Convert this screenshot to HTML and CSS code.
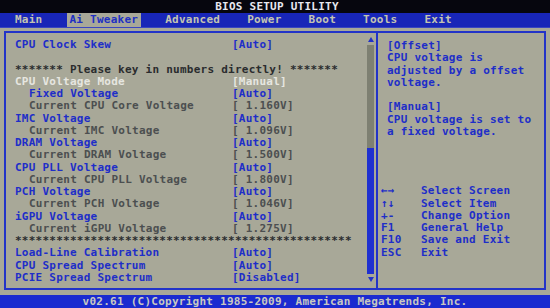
FILE: index.html
```html
<!DOCTYPE html>
<html lang="en">

<head>
    <meta charset="UTF-8" />
    <meta name="viewport" content="width=device-width, initial-scale=1.0" />
    <title>BIOS Setup Utility</title>
    <link rel="stylesheet" href="styles.css">
</head>

<body>
    <div class="screen">
        <div class="title">BIOS SETUP UTILITY</div>
        <nav class="menu">
            <span class="tab">Main</span>
            <span class="tab active">Ai Tweaker</span>
            <span class="tab">Advanced</span>
            <span class="tab">Power</span>
            <span class="tab">Boot</span>
            <span class="tab">Tools</span>
            <span class="tab">Exit</span>
        </nav>
        <div class="main">
            <div class="frame">
                <div class="list">
                    <div class="rows">
                        <div class="row item"><span>CPU Clock Skew</span><span>[Auto]</span></div>
                        <div class="row"></div>
                        <div class="row note">******* Please key in numbers directly! *******</div>
                        <div class="row selected"><span>CPU Voltage Mode</span><span>[Manual]</span></div>
                        <div class="row item sub"><span>Fixed Voltage</span><span>[Auto]</span></div>
                        <div class="row info sub"><span>Current CPU Core Voltage</span><span>[ 1.160V]</span></div>
                        <div class="row item"><span>IMC Voltage</span><span>[Auto]</span></div>
                        <div class="row info sub"><span>Current IMC Voltage</span><span>[ 1.096V]</span></div>
                        <div class="row item"><span>DRAM Voltage</span><span>[Auto]</span></div>
                        <div class="row info sub"><span>Current DRAM Voltage</span><span>[ 1.500V]</span></div>
                        <div class="row item"><span>CPU PLL Voltage</span><span>[Auto]</span></div>
                        <div class="row info sub"><span>Current CPU PLL Voltage</span><span>[ 1.800V]</span></div>
                        <div class="row item"><span>PCH Voltage</span><span>[Auto]</span></div>
                        <div class="row info sub"><span>Current PCH Voltage</span><span>[ 1.046V]</span></div>
                        <div class="row item"><span>iGPU Voltage</span><span>[Auto]</span></div>
                        <div class="row info sub"><span>Current iGPU Voltage</span><span>[ 1.275V]</span></div>
                        <div class="row note">*************************************************</div>
                        <div class="row item"><span>Load-Line Calibration</span><span>[Auto]</span></div>
                        <div class="row item"><span>CPU Spread Spectrum</span><span>[Auto]</span></div>
                        <div class="row item"><span>PCIE Spread Spectrum</span><span>[Disabled]</span></div>
                    </div>
                    <div class="scrollbar">
                        <div class="arrow up"></div>
                        <div class="track">
                            <div class="gap"></div>
                            <div class="thumb"></div>
                        </div>
                        <div class="arrow down"></div>
                    </div>
                </div>
                <div class="help">
                    <div class="help-text">
                        <div>[Offset]</div>
                        <div>CPU voltage is</div>
                        <div>adjusted by a offset</div>
                        <div>voltage.</div>
                        <div class="line-gap"></div>
                        <div>[Manual]</div>
                        <div>CPU voltage is set to</div>
                        <div>a fixed voltage.</div>
                    </div>
                    <div class="keys">
                        <span>←→</span><span>Select Screen</span>
                        <span>↑↓</span><span>Select Item</span>
                        <span>+-</span><span>Change Option</span>
                        <span>F1</span><span>General Help</span>
                        <span>F10</span><span>Save and Exit</span>
                        <span>ESC</span><span>Exit</span>
                    </div>
                </div>
            </div>
        </div>
        <div class="footer">v02.61 (C)Copyright 1985-2009, American Megatrends, Inc.</div>
    </div>
</body>

</html>
```

FILE: styles.css
```css
body {
    margin: 0;
    background-color: #a8a898;
    font-family: "DejaVu Sans Mono", "Liberation Mono", monospace;
    font-size: 11px;
    letter-spacing: 0.25px;
    font-weight: bold;
    line-height: 12.26px;
}

.screen {
    width: 550px;
    height: 308px;
    display: flex;
    flex-direction: column;
    overflow: hidden;
}

.title {
    height: 13px;
    flex-shrink: 0;
    background-color: #06060e;
    color: #e8e8f0;
    text-align: center;
    line-height: 13px;
    padding-left: 4px;
}

.menu {
    height: 14px;
    flex-shrink: 0;
    background-color: #1826b8;
    display: flex;
    gap: 21px;
    padding-left: 12px;
    border-bottom: 1px solid #3a46c0;
}

.tab {
    padding: 0 3px;
    color: #c4c4b0;
    line-height: 14px;
}

.tab.active {
    background-color: #a8a898;
    color: #2030c4;
}

.main {
    flex: 1;
    min-height: 0;
    padding: 3px 4px 5px 4px;
    display: flex;
}

.frame {
    flex: 1;
    display: flex;
    border: 2px solid #2233c8;
}

.list {
    width: 370px;
    display: flex;
    border-right: 2px solid #2233c8;
}

.rows {
    flex: 1;
    padding: 6px 0 0 9px;
}

.row {
    display: grid;
    grid-template-columns: 217px 1fr;
    height: 12.26px;
    white-space: pre;
}

.row.sub span:first-child {
    padding-left: 14px;
}

.item {
    color: #1e2ec8;
}

.info {
    color: #4c4f50;
}

.selected {
    color: #e6e6e0;
}

.note {
    display: block;
    color: #2a2c2e;
}

.scrollbar {
    width: 7px;
    margin: 4px 2px 6px 0;
    display: flex;
    flex-direction: column;
    align-items: center;
    gap: 3px;
}

.arrow {
    width: 0;
    height: 0;
    border-left: 3.5px solid transparent;
    border-right: 3.5px solid transparent;
}

.arrow.up {
    border-bottom: 5px solid #2233c8;
}

.arrow.down {
    border-top: 5px solid #2233c8;
}

.track {
    flex: 1;
    width: 7px;
    display: flex;
    flex-direction: column;
    background-color: #7e8072;
}

.gap {
    flex: 0 0 45%;
}

.thumb {
    flex: 1;
    background-color: #1f30d0;
}

.help {
    flex: 1;
    display: flex;
    flex-direction: column;
    padding: 7px 0 29px 3px;
    color: #1e2ec8;
}

.help-text {
    padding-left: 6px;
}

.line-gap {
    height: 12.26px;
}

.keys {
    margin-top: auto;
    display: grid;
    grid-template-columns: 40px 1fr;
}

.footer {
    height: 13px;
    flex-shrink: 0;
    background-color: #1a2ad0;
    color: #c8c8c0;
    text-align: center;
    line-height: 13px;
}
```
